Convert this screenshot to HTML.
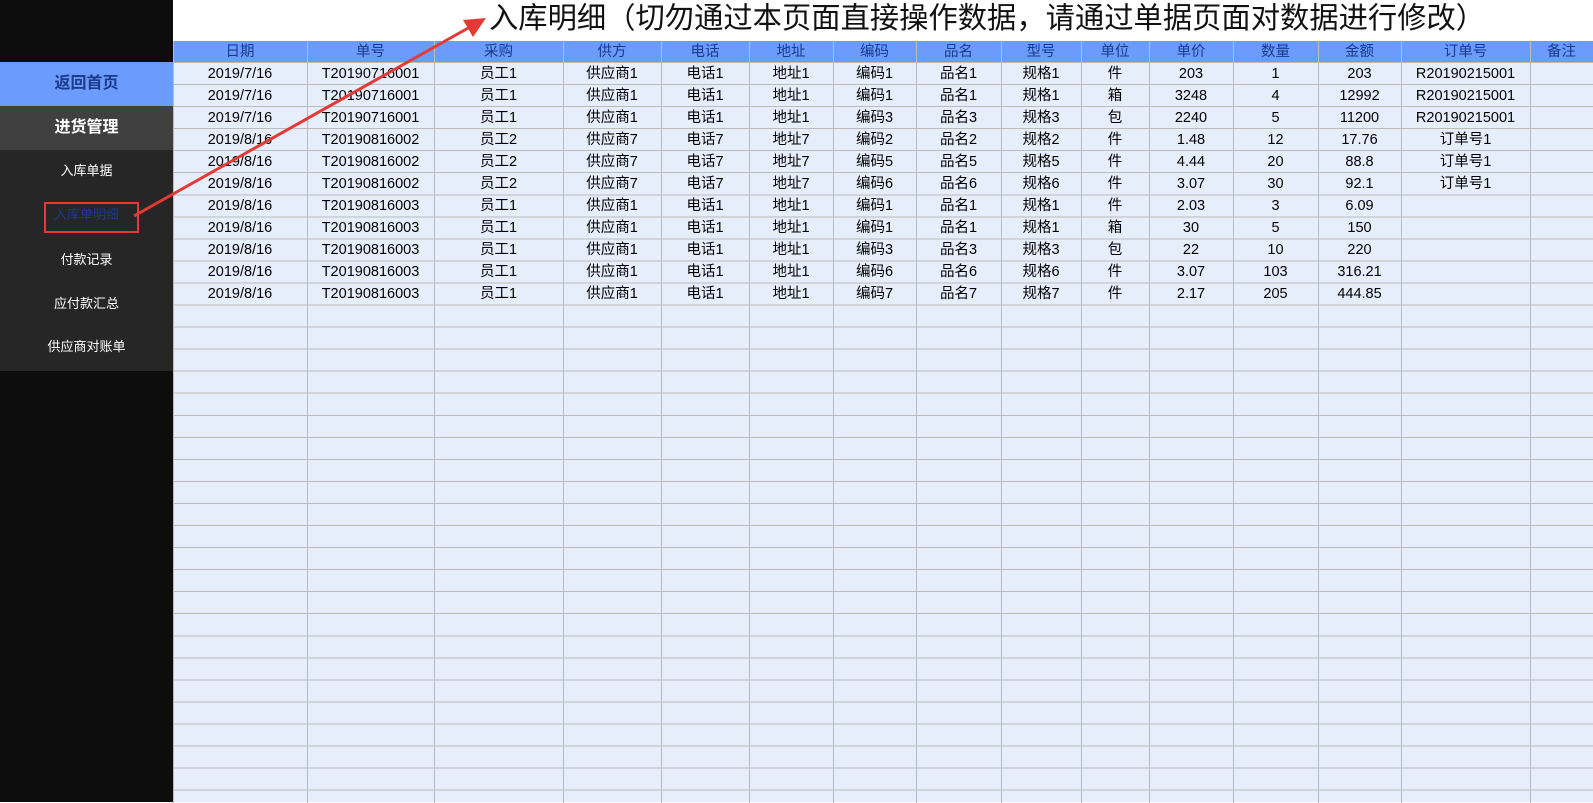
<!DOCTYPE html>
<html><head><meta charset="utf-8"><style>
*{margin:0;padding:0;box-sizing:border-box}
body{width:1593px;height:802px;overflow:hidden;background:#fff;position:relative;font-family:"Liberation Sans","Noto Sans CJK SC",sans-serif}
#side{position:absolute;left:0;top:0;width:173px;height:802px;background:#0d0d0d}
.m{position:absolute;left:0;width:173px;text-align:center;color:#fff}
#title{position:absolute;left:489px;top:0;font-size:29.3px;line-height:38px;color:#111;white-space:nowrap}
#grid{position:absolute;left:173px;top:62px;width:1420px;height:740px;background:#e6eefc;
background-image:repeating-linear-gradient(to bottom,#bbb 0 1px,transparent 1px 22.05px)}
.v{position:absolute;top:41px;width:1px;height:762px;background:#bbb}
#head{position:absolute;left:173px;top:41px;width:1420px;height:21px;background:#6b9bfc}
table{position:absolute;left:173px;top:41px;border-collapse:collapse;table-layout:fixed}
td{padding:0;text-align:center;font-size:14.5px;white-space:nowrap;overflow:hidden;color:#000;height:22.05px;line-height:22px}
td span{position:relative;top:1px}
tr.h td{color:#1a3a8a;height:21px;line-height:20px}
</style></head><body>
<div id="side">
<div class="m" style="top:62px;height:44px;background:#6b9bfc;color:#1a3a8a;font-weight:bold;font-size:16px;line-height:44px">返回首页</div>
<div class="m" style="top:106px;height:44px;background:#404040;font-weight:bold;font-size:16px;line-height:44px">进货管理</div>
<div class="m" style="top:150px;height:221px;background:#262626"></div>
<div class="m" style="top:160px;font-size:13px;line-height:22px">入库单据</div>
<div class="m" style="top:204px;font-size:13px;line-height:22px;color:#1a3a8a">入库单明细</div>
<div class="m" style="top:249px;font-size:13px;line-height:22px">付款记录</div>
<div class="m" style="top:293px;font-size:13px;line-height:22px">应付款汇总</div>
<div class="m" style="top:336px;font-size:13px;line-height:22px">供应商对账单</div>
<div style="position:absolute;left:44px;top:202px;width:95px;height:31px;border:2px solid #e53935"></div>
</div>
<div id="title">入库明细（切勿通过本页面直接操作数据，请通过单据页面对数据进行修改）</div>
<div id="head"></div>
<div id="grid"></div>
<div class="v" style="left:173px"></div><div class="v" style="left:307px"></div><div class="v" style="left:434px"></div><div class="v" style="left:563px"></div><div class="v" style="left:661px"></div><div class="v" style="left:749px"></div><div class="v" style="left:833px"></div><div class="v" style="left:916px"></div><div class="v" style="left:1001px"></div><div class="v" style="left:1081px"></div><div class="v" style="left:1149px"></div><div class="v" style="left:1233px"></div><div class="v" style="left:1318px"></div><div class="v" style="left:1401px"></div><div class="v" style="left:1530px"></div>
<table>
<colgroup><col style="width:134px"><col style="width:127px"><col style="width:129px"><col style="width:98px"><col style="width:88px"><col style="width:84px"><col style="width:83px"><col style="width:85px"><col style="width:80px"><col style="width:68px"><col style="width:84px"><col style="width:85px"><col style="width:83px"><col style="width:129px"><col style="width:63px"></colgroup>
<tr class="h"><td>日期</td><td>单号</td><td>采购</td><td>供方</td><td>电话</td><td>地址</td><td>编码</td><td>品名</td><td>型号</td><td>单位</td><td>单价</td><td>数量</td><td>金额</td><td>订单号</td><td>备注</td></tr>
<tr><td><span>2019/7/16</span></td><td><span>T20190716001</span></td><td><span>员工1</span></td><td><span>供应商1</span></td><td><span>电话1</span></td><td><span>地址1</span></td><td><span>编码1</span></td><td><span>品名1</span></td><td><span>规格1</span></td><td><span>件</span></td><td><span>203</span></td><td><span>1</span></td><td><span>203</span></td><td><span>R20190215001</span></td><td></td></tr>
<tr><td><span>2019/7/16</span></td><td><span>T20190716001</span></td><td><span>员工1</span></td><td><span>供应商1</span></td><td><span>电话1</span></td><td><span>地址1</span></td><td><span>编码1</span></td><td><span>品名1</span></td><td><span>规格1</span></td><td><span>箱</span></td><td><span>3248</span></td><td><span>4</span></td><td><span>12992</span></td><td><span>R20190215001</span></td><td></td></tr>
<tr><td><span>2019/7/16</span></td><td><span>T20190716001</span></td><td><span>员工1</span></td><td><span>供应商1</span></td><td><span>电话1</span></td><td><span>地址1</span></td><td><span>编码3</span></td><td><span>品名3</span></td><td><span>规格3</span></td><td><span>包</span></td><td><span>2240</span></td><td><span>5</span></td><td><span>11200</span></td><td><span>R20190215001</span></td><td></td></tr>
<tr><td><span>2019/8/16</span></td><td><span>T20190816002</span></td><td><span>员工2</span></td><td><span>供应商7</span></td><td><span>电话7</span></td><td><span>地址7</span></td><td><span>编码2</span></td><td><span>品名2</span></td><td><span>规格2</span></td><td><span>件</span></td><td><span>1.48</span></td><td><span>12</span></td><td><span>17.76</span></td><td><span>订单号1</span></td><td></td></tr>
<tr><td><span>2019/8/16</span></td><td><span>T20190816002</span></td><td><span>员工2</span></td><td><span>供应商7</span></td><td><span>电话7</span></td><td><span>地址7</span></td><td><span>编码5</span></td><td><span>品名5</span></td><td><span>规格5</span></td><td><span>件</span></td><td><span>4.44</span></td><td><span>20</span></td><td><span>88.8</span></td><td><span>订单号1</span></td><td></td></tr>
<tr><td><span>2019/8/16</span></td><td><span>T20190816002</span></td><td><span>员工2</span></td><td><span>供应商7</span></td><td><span>电话7</span></td><td><span>地址7</span></td><td><span>编码6</span></td><td><span>品名6</span></td><td><span>规格6</span></td><td><span>件</span></td><td><span>3.07</span></td><td><span>30</span></td><td><span>92.1</span></td><td><span>订单号1</span></td><td></td></tr>
<tr><td><span>2019/8/16</span></td><td><span>T20190816003</span></td><td><span>员工1</span></td><td><span>供应商1</span></td><td><span>电话1</span></td><td><span>地址1</span></td><td><span>编码1</span></td><td><span>品名1</span></td><td><span>规格1</span></td><td><span>件</span></td><td><span>2.03</span></td><td><span>3</span></td><td><span>6.09</span></td><td></td><td></td></tr>
<tr><td><span>2019/8/16</span></td><td><span>T20190816003</span></td><td><span>员工1</span></td><td><span>供应商1</span></td><td><span>电话1</span></td><td><span>地址1</span></td><td><span>编码1</span></td><td><span>品名1</span></td><td><span>规格1</span></td><td><span>箱</span></td><td><span>30</span></td><td><span>5</span></td><td><span>150</span></td><td></td><td></td></tr>
<tr><td><span>2019/8/16</span></td><td><span>T20190816003</span></td><td><span>员工1</span></td><td><span>供应商1</span></td><td><span>电话1</span></td><td><span>地址1</span></td><td><span>编码3</span></td><td><span>品名3</span></td><td><span>规格3</span></td><td><span>包</span></td><td><span>22</span></td><td><span>10</span></td><td><span>220</span></td><td></td><td></td></tr>
<tr><td><span>2019/8/16</span></td><td><span>T20190816003</span></td><td><span>员工1</span></td><td><span>供应商1</span></td><td><span>电话1</span></td><td><span>地址1</span></td><td><span>编码6</span></td><td><span>品名6</span></td><td><span>规格6</span></td><td><span>件</span></td><td><span>3.07</span></td><td><span>103</span></td><td><span>316.21</span></td><td></td><td></td></tr>
<tr><td><span>2019/8/16</span></td><td><span>T20190816003</span></td><td><span>员工1</span></td><td><span>供应商1</span></td><td><span>电话1</span></td><td><span>地址1</span></td><td><span>编码7</span></td><td><span>品名7</span></td><td><span>规格7</span></td><td><span>件</span></td><td><span>2.17</span></td><td><span>205</span></td><td><span>444.85</span></td><td></td><td></td></tr>
</table>
<svg style="position:absolute;left:0;top:0" width="1593" height="802">
<line x1="134" y1="216" x2="470" y2="27" stroke="#e53935" stroke-width="3"/>
<polygon points="486,18 463,20 473,37" fill="#e53935"/>
</svg>
</body></html>
